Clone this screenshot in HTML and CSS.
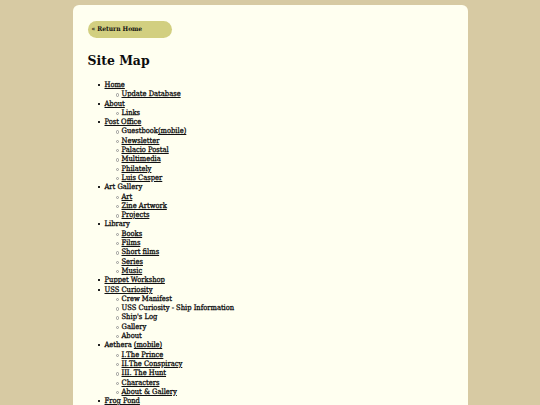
FILE: index.html
```html
<!DOCTYPE html>
<html>
<head>
<meta charset="utf-8">
<link rel="stylesheet" href="styles.css">
</head>
<body>
<div class="card">
  <a class="home-btn" href="#">« Return Home</a>
  <h1 class="title">Site Map</h1>
  <ul class="map">
    <li><a href="#">Home</a>
      <ul><li><a href="#">Update Database</a></li></ul></li>
    <li><a href="#">About</a>
      <ul><li>Links</li></ul></li>
    <li><a href="#">Post Office</a>
      <ul>
        <li>Guestbook<a href="#">(mobile)</a></li>
        <li><a href="#">Newsletter</a></li>
        <li><a href="#">Palacio Postal</a></li>
        <li><a href="#">Multimedia</a></li>
        <li><a href="#">Philately</a></li>
        <li><a href="#">Luis Casper</a></li>
      </ul></li>
    <li>Art Gallery
      <ul>
        <li><a href="#">Art</a></li>
        <li><a href="#">Zine Artwork</a></li>
        <li><a href="#">Projects</a></li>
      </ul></li>
    <li>Library
      <ul>
        <li><a href="#">Books</a></li>
        <li><a href="#">Films</a></li>
        <li><a href="#">Short films</a></li>
        <li><a href="#">Series</a></li>
        <li><a href="#">Music</a></li>
      </ul></li>
    <li><a href="#">Puppet Workshop</a></li>
    <li><a href="#">USS Curiosity</a>
      <ul>
        <li>Crew Manifest</li>
        <li>USS Curiosity - Ship Information</li>
        <li>Ship's Log</li>
        <li>Gallery</li>
        <li>About</li>
      </ul></li>
    <li>Aethera <a href="#">(mobile)</a>
      <ul>
        <li><a href="#">I.The Prince</a></li>
        <li><a href="#">II.The Conspiracy</a></li>
        <li><a href="#">III. The Hunt</a></li>
        <li><a href="#">Characters</a></li>
        <li><a href="#">About &amp; Gallery</a></li>
      </ul></li>
    <li><a href="#">Frog Pond</a></li>
  </ul>
</div>
</body>
</html>
```
FILE: styles.css
```css
html, body {
  margin: 0;
  padding: 0;
  background: #d7caa3;
}
body {
  font-family: "DejaVu Serif Condensed", "DejaVu Serif", serif;
  color: #111;
}
.card {
  width: 365px;
  margin: 5px auto 0;
  padding: 16px 15px 20px;
  background: #fffff0;
  border-radius: 6px;
  min-height: 400px;
}
.home-btn {
  display: block;
  width: max-content;
  background: #d2cf80;
  color: #111;
  text-decoration: none;
  font-weight: bold;
  font-size: 6.6px;
  line-height: 17px;
  height: 17px;
  padding: 0 30px 0 4px;
  border-radius: 9px;
}
.title {
  font-size: 13.8px;
  font-weight: bold;
  margin: 12px 0 10px;
  line-height: 20px;
  color: #0c0c0c;
}
.map, .map ul {
  margin: 0;
  padding-left: 17px;
  font-size: 7.5px;
  line-height: 9.3px;
  list-style: none;
  -webkit-text-stroke: 0.3px #111;
}
.map li {
  position: relative;
}
.map li::before {
  content: "";
  position: absolute;
  left: -7px;
  top: 4px;
  width: 2px;
  height: 2px;
  background: #222;
}
.map ul li::before {
  left: -6px;
  width: 1.4px;
  height: 1.4px;
  background: transparent;
  border: 0.6px solid #999;
  border-radius: 50%;
}
.map a {
  color: #111;
  text-decoration: underline;
}
```
